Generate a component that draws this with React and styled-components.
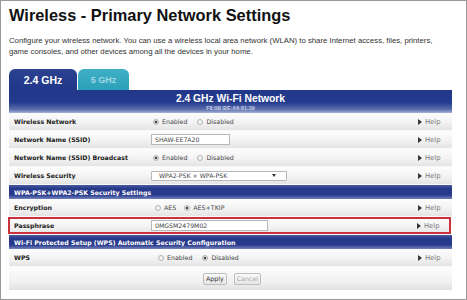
import React from "react";
import styled, { createGlobalStyle, css } from "styled-components";

const GlobalStyle = createGlobalStyle`
  html, body {
    margin: 0;
    padding: 0;
    background: #fff;
  }
  * {
    box-sizing: border-box;
  }
`;

const Page = styled.div`
  width: 467px;
  height: 300px;
  border: 1px solid #9a9a9a;
  padding: 0 14px 0 7px;
  background: #fff;
  overflow: hidden;
  font-family: "DejaVu Sans", Verdana, sans-serif;
`;

const Title = styled.h1`
  margin: 4px 0 0 1px;
  font-family: "Liberation Sans", Arial, sans-serif;
  font-size: 16.4px;
  line-height: 20px;
  font-weight: bold;
  color: #111;
`;

const Intro = styled.p`
  margin: 11px 0 0 1px;
  font-family: "Liberation Sans", Arial, sans-serif;
  font-size: 7.75px;
  line-height: 10.5px;
  color: #333;
  white-space: nowrap;
`;

const Tabs = styled.div`
  display: flex;
  gap: 1px;
  margin: 12px 0 0 1px;
  height: 21px;
`;

const Tab = styled.div`
  width: ${(p) => p.w}px;
  height: 21px;
  border-radius: 6px 6px 0 0;
  display: flex;
  align-items: center;
  justify-content: center;
  font-family: "Liberation Sans", Arial, sans-serif;
  font-weight: bold;
  font-size: 10.5px;
  padding-top: 1px;
  ${(p) =>
    p.active
      ? css`
          background: linear-gradient(#2a4290, #21378a);
          color: #fff;
        `
      : css`
          background: linear-gradient(#3fb0c6, #2ba0b9);
          color: #9fd8e2;
          font-size: 9px;
        `}
`;

const Table = styled.div`
  margin-left: 1px;
  width: 443px;
`;

const Banner = styled.div`
  height: 23px;
  background: linear-gradient(#21378a 0%, #253d8e 55%, #5d6fae 85%, #a9b3d8 100%);
  display: flex;
  flex-direction: column;
  align-items: center;
  padding-top: 3px;
`;

const BannerTitle = styled.div`
  font-family: "Liberation Sans", Arial, sans-serif;
  font-weight: bold;
  font-size: 10.3px;
  line-height: 12px;
  color: #fff;
`;

const Mac = styled.div`
  font-family: "Liberation Sans", Arial, sans-serif;
  font-weight: bold;
  font-size: 5.4px;
  line-height: 6px;
  color: #c9d0e8;
`;

const Row = styled.div`
  display: grid;
  grid-template-columns: 142px 1fr 34px;
  align-items: center;
  height: ${(p) => p.h || 18}px;
  background: linear-gradient(#fdfdfd, #f3f3f3 55%, #e4e4e4);
  border-bottom: 1px solid #f8f8f8;
  ${(p) =>
    p.marked &&
    css`
      box-shadow: inset 0 0 0 2px #c9323d;
      margin-left: -1px;
      margin-right: 1px;
      padding-left: 1px;
    `}
`;

const Label = styled.div`
  padding-left: 5px;
  font-weight: bold;
  font-size: 6.25px;
  color: #222;
  white-space: nowrap;
`;

const Control = styled.div`
  display: flex;
  align-items: center;
  padding-left: ${(p) => p.indent || 0}px;
  font-size: 6.3px;
  color: #444;
`;

const Section = styled.div`
  height: ${(p) => p.h}px;
  display: flex;
  align-items: center;
  padding-left: 5px;
  background: linear-gradient(#4a5c9e, #27398a 25%, #27398a 70%, #7483bd);
  color: #fff;
  font-weight: bold;
  font-size: 6.25px;
  white-space: nowrap;
`;

const Radio = styled.span`
  width: 6px;
  height: 6px;
  border-radius: 50%;
  border: 1px solid #b4b4b4;
  background: radial-gradient(circle, #fff, #e3e3e3);
  margin: 0 3px 0 ${(p) => p.gap || 0}px;
  ${(p) =>
    p.checked &&
    css`
      background: radial-gradient(circle, #444 0 1.3px, #ddd 1.6px, #eee);
    `}
`;

const TextBox = styled.input`
  width: ${(p) => p.w}px;
  height: 11px;
  border: 1px solid #b8b8b8;
  padding: 0 3px;
  font-family: "DejaVu Sans", Verdana, sans-serif;
  font-size: 6.2px;
  color: #444;
  background: #fff;
  outline: none;
`;

const Select = styled.div`
  width: 136px;
  height: 10px;
  border: 1px solid #b8b8b8;
  border-radius: 1px;
  display: flex;
  align-items: center;
  justify-content: space-between;
  padding: 0 10px 0 7px;
  font-size: 6.2px;
  color: #444;
  background: #fff;
`;

const Caret = styled.span`
  width: 0;
  height: 0;
  border-left: 2px solid transparent;
  border-right: 2px solid transparent;
  border-top: 3px solid #333;
`;

const Help = styled.div`
  display: flex;
  align-items: center;
  font-size: 6.8px;
  color: #777;
  gap: 3px;
  &::before {
    content: "";
    width: 0;
    height: 0;
    border-top: 3px solid transparent;
    border-bottom: 3px solid transparent;
    border-left: 4px solid #333;
  }
`;

const Actions = styled.div`
  height: 23px;
  display: flex;
  justify-content: center;
  align-items: center;
  gap: 7px;
  padding-left: 3px;
  background: linear-gradient(#fdfdfd, #f2f2f2 60%, #e2e2e2);
`;

const Button = styled.button`
  height: 12px;
  padding: 0 2px;
  border: 1px solid #bcbcbc;
  border-radius: 2px;
  background: linear-gradient(#fafafa, #e6e6e6);
  font-family: "DejaVu Sans", Verdana, sans-serif;
  font-size: 6.3px;
  line-height: 10px;
  color: ${(p) => (p.disabled ? "#aaa" : "#333")};
`;

const RadioPair = ({ first, second, checked, indent, gap = 10 }) => (
  <Control indent={indent}>
    <Radio checked={checked === 0} />
    {first}
    <Radio checked={checked === 1} gap={gap} />
    {second}
  </Control>
);

export default function App() {
  return (
    <>
      <GlobalStyle />
      <Page>
        <Title>Wireless - Primary Network Settings</Title>
        <Intro>
          Configure your wireless network. You can use a wireless local area network (WLAN) to share Internet access, files, printers,
          <br />
          game consoles, and other devices among all the devices in your home.
        </Intro>
        <Tabs>
          <Tab active w={68}>2.4 GHz</Tab>
          <Tab w={51}>5 GHz</Tab>
        </Tabs>
        <Table>
          <Banner>
            <BannerTitle>2.4 GHz Wi-Fi Network</BannerTitle>
            <Mac>F8:0B:BE:A6:81:39</Mac>
          </Banner>
          <Row>
            <Label>Wireless Network</Label>
            <RadioPair first="Enabled" second="Disabled" checked={0} indent={2} />
            <Help>Help</Help>
          </Row>
          <Row>
            <Label>Network Name (SSID)</Label>
            <Control>
              <TextBox w={79} value="SHAW-EE7A20" readOnly />
            </Control>
            <Help>Help</Help>
          </Row>
          <Row>
            <Label>Network Name (SSID) Broadcast</Label>
            <RadioPair first="Enabled" second="Disabled" checked={0} indent={2} />
            <Help>Help</Help>
          </Row>
          <Row>
            <Label>Wireless Security</Label>
            <Control>
              <Select>
                WPA2-PSK + WPA-PSK
                <Caret />
              </Select>
            </Control>
            <Help>Help</Help>
          </Row>
          <Section h={14}>WPA-PSK+WPA2-PSK Security Settings</Section>
          <Row>
            <Label>Encryption</Label>
            <RadioPair first="AES" second="AES+TKIP" checked={1} indent={4} gap={8} />
            <Help>Help</Help>
          </Row>
          <Row marked>
            <Label>Passphrase</Label>
            <Control>
              <TextBox w={117} value="0MGSM2479M02" readOnly />
            </Control>
            <Help>Help</Help>
          </Row>
          <Section h={14}>Wi-Fi Protected Setup (WPS) Automatic Security Configuration</Section>
          <Row>
            <Label>WPS</Label>
            <RadioPair first="Enabled" second="Disabled" checked={1} indent={7} />
            <Help>Help</Help>
          </Row>
          <Actions>
            <Button>Apply</Button>
            <Button disabled>Cancel</Button>
          </Actions>
        </Table>
      </Page>
    </>
  );
}
